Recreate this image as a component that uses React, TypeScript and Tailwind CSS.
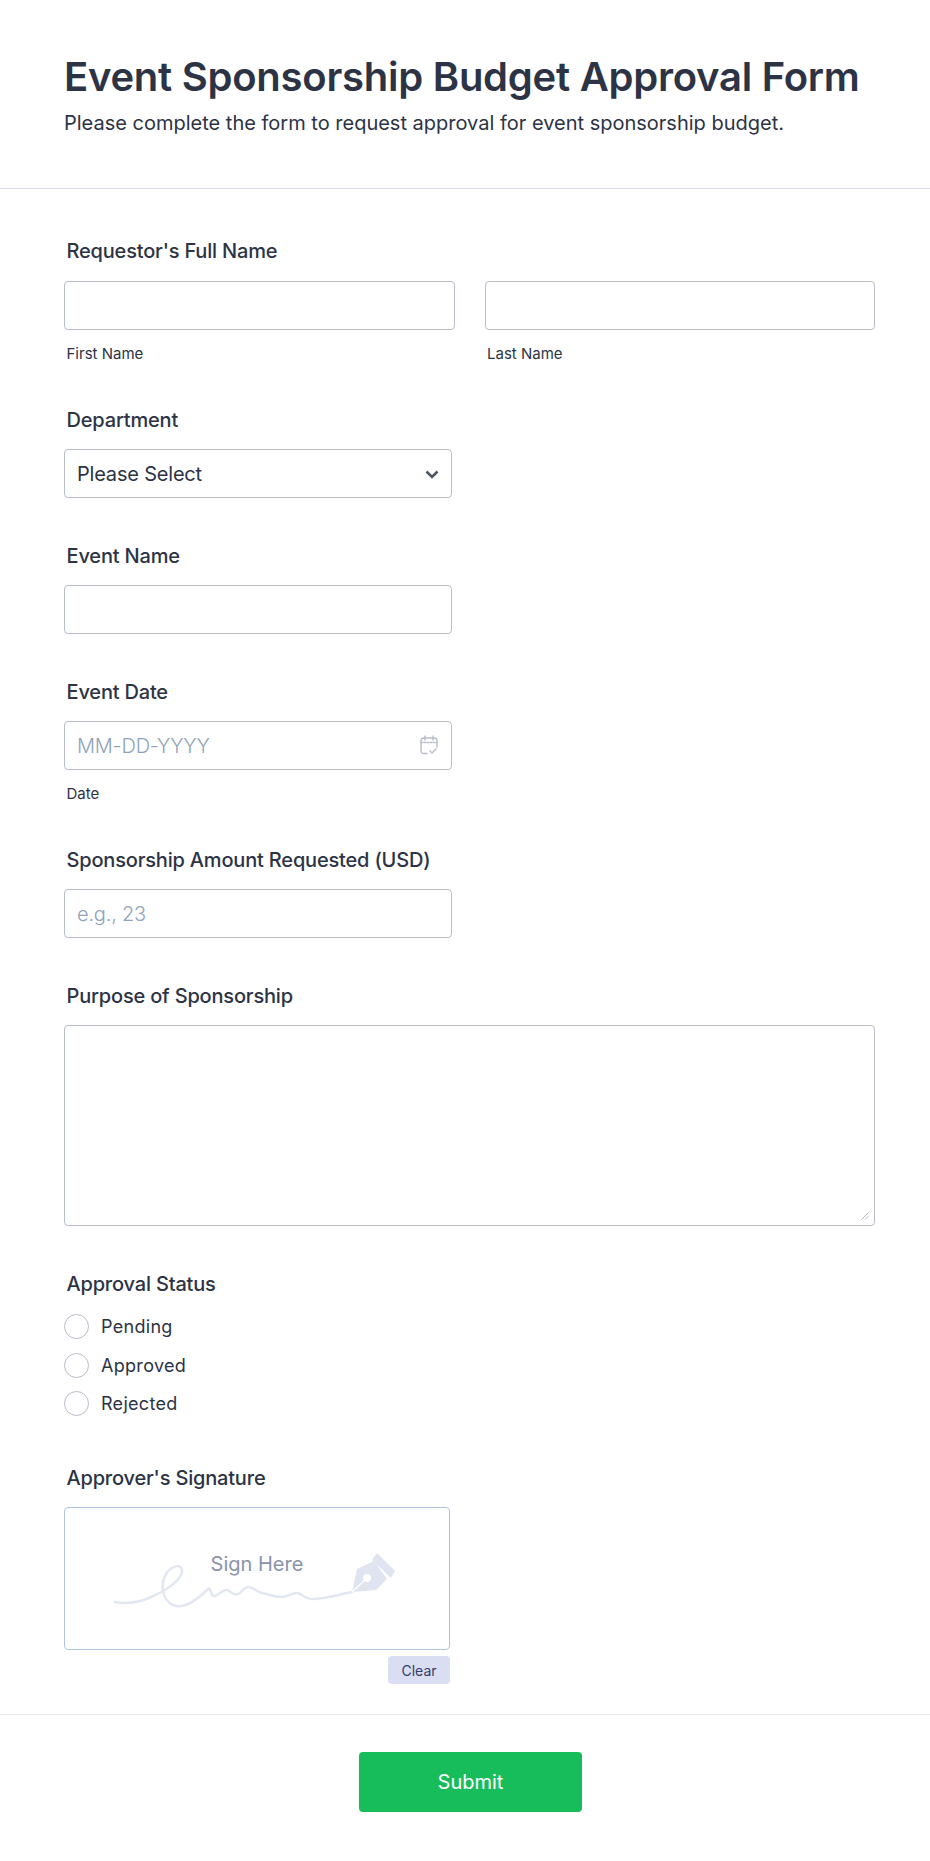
import React from 'react';

const inputCls =
  'block h-[49px] rounded-[4px] border border-[#b8bdc9] bg-white px-[12px] text-[20px] tracking-[-0.2px] text-[#2c3345] placeholder:text-[#8fa3ba] placeholder:font-light outline-none';

const Label: React.FC<{ children: React.ReactNode }> = ({ children }) => (
  <label className="block pl-[2.5px] text-[20px] leading-[24px] font-medium tracking-[-0.18px] text-[#2c3345]">{children}</label>
);

const Sub: React.FC<{ children: React.ReactNode }> = ({ children }) => (
  <span className="mt-[14px] block pl-[2.5px] text-[15px] leading-[20px] text-[#2c3345]">{children}</span>
);

const CalendarIcon = () => (
  <svg width="18" height="20" viewBox="0 0 18 20" fill="none" stroke="#b8bdc9" strokeWidth="1.4" strokeLinecap="round" strokeLinejoin="round">
    <path d="M7 18.500H3.500A2.500 2.500 0 0 1 1 16V5.500A2.500 2.500 0 0 1 3.500 3H14.500A2.500 2.500 0 0 1 17 5.500V12" />
    <path d="M5 1V5M13 1V5" />
    <path d="M1 7.500H17" strokeDasharray="1.500 1.500" />
    <path d="M10 16L12 18L16 14" />
  </svg>
);

const Signature = () => (
  <svg className="block" width="384" height="141" viewBox="0 0 384 141" fill="none">
    <path
      d="M50 94C60 96 72 95 84 90C100 83 118 72 117 62C116 55 106 58 101 66C95 76 97 92 108 97C120 102 134 90 143 81C146 78 145 88 149 88C154 88 157 81 162 82C166 83 168 88 173 86C178 84 179 78 184 79C189 80 192 84 197 85C204 86 210 90 217 89C224 88 229 84 233 85C238 87 241 91 248 91C258 91 272 87 287 84"
      stroke="#e3e7f2"
      strokeWidth="2.500"
      strokeLinecap="round"
    />
    <path d="M287 84L292 61L309 53L322 71L311 82Z" fill="#e0e4f0" />
    <path d="M312 45L330 63L326 70L307 52Z" fill="#e0e4f0" />
    <circle cx="302" cy="70" r="4" fill="#fff" />
    <path d="M287 84L300 72" stroke="#fff" strokeWidth="1.500" />
  </svg>
);

export default function App() {
  return (
    <div className="min-h-[1861px] bg-white font-['Inter',sans-serif] text-[#2c3345]">
      <header className="h-[189px] border-b border-[#dadee8] pl-[64px] pt-[53px]">
        <h1 className="text-[40px] leading-[48px] font-semibold tracking-[-0.25px]">Event Sponsorship Budget Approval Form</h1>
        <p className="mt-[8px] text-[20px] leading-[28px] font-normal">
          Please complete the form to request approval for event sponsorship budget.
        </p>
      </header>

      <form className="pl-[64px] pr-[55px] pt-[50px]">
        <Label>Requestor's Full Name</Label>
        <div className="mt-[18px] flex gap-[30px]">
          <div className="flex-1">
            <input className={inputCls + ' w-full'} />
            <Sub>First Name</Sub>
          </div>
          <div className="flex-1">
            <input className={inputCls + ' w-full'} />
            <Sub>Last Name</Sub>
          </div>
        </div>

        <div className="mt-[44px]">
          <Label>Department</Label>
          <div className="relative mt-[17px] w-[388px]">
            <select className={inputCls + ' w-full appearance-none'}>
              <option>Please Select</option>
            </select>
            <svg className="absolute right-[13px] top-[21px]" width="14" height="9" viewBox="0 0 14 9" fill="none" stroke="#4b5563" strokeWidth="2.500">
              <path d="M1.500 1.500L7 7L12.500 1.500" />
            </svg>
          </div>
        </div>

        <div className="mt-[46px]">
          <Label>Event Name</Label>
          <input className={inputCls + ' mt-[17px] w-[388px]'} />
        </div>

        <div className="mt-[46px]">
          <Label>Event Date</Label>
          <div className="relative mt-[17px] w-[388px]">
            <input className={inputCls + ' w-full'} placeholder="MM-DD-YYYY" />
            <span className="absolute right-[14px] top-[14px]">
              <CalendarIcon />
            </span>
          </div>
          <Sub>Date</Sub>
        </div>

        <div className="mt-[44px]">
          <Label>Sponsorship Amount Requested (USD)</Label>
          <input className={inputCls + ' mt-[17px] w-[388px]'} placeholder="e.g., 23" />
        </div>

        <div className="mt-[46px]">
          <Label>Purpose of Sponsorship</Label>
          <div className="relative mt-[17px]">
            <textarea className="block h-[201px] w-full resize-none rounded-[4px] border border-[#b8bdc9] bg-white outline-none" />
            <svg className="absolute bottom-[6px] right-[6px]" width="8" height="8" viewBox="0 0 8 8" fill="none" stroke="#b8bdc9" strokeWidth="1">
              <path d="M0.500 7.500L7.500 0.500M4 7.500L7.500 4" />
            </svg>
          </div>
        </div>

        <div className="mt-[46px]">
          <Label>Approval Status</Label>
          <div className="mt-[18px] flex flex-col gap-[13.500px]">
            {['Pending', 'Approved', 'Rejected'].map((o) => (
              <label key={o} className="flex h-[25px] items-center gap-[12px] text-[18px] tracking-[0.3px]">
                <input type="radio" name="status" className="h-[25px] w-[25px] appearance-none rounded-full border border-[#b8bdc9]" />
                {o}
              </label>
            ))}
          </div>
        </div>

        <div className="mt-[50px]">
          <Label>Approver's Signature</Label>
          <div className="relative mt-[17px] w-[386px] rounded-[4px] border border-[#b0c4e0]">
            <Signature />
            <span className="absolute left-0 right-0 top-[42px] text-center text-[20px] leading-[28px] text-[#8894ab]">Sign Here</span>
          </div>
          <div className="mt-[6px] flex w-[386px] justify-end">
            <button type="button" className="h-[28px] w-[62px] rounded-[4px] bg-[#dadef3] text-[14px] text-[#343c6a]">
              Clear
            </button>
          </div>
        </div>
      </form>

      <footer className="mt-[30px] flex justify-center border-t border-[#e3e6ef] pl-[11px] pt-[37px]">
        <button type="button" className="h-[60px] w-[223px] rounded-[4px] bg-[#18bd5b] text-[20px] font-normal text-white">
          Submit
        </button>
      </footer>
    </div>
  );
}
